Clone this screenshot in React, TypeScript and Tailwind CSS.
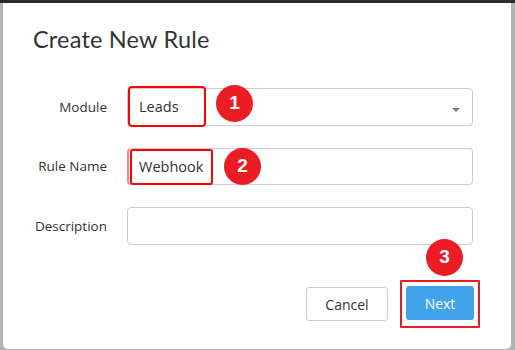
import React from "react";

function Badge({ n, className }: { n: string; className: string }) {
  return (
    <div
      className={
        "absolute flex h-[37px] w-[37px] items-center justify-center rounded-full bg-[#ec1c24] text-[19px] font-bold text-white " +
        className
      }
      style={{ fontFamily: "Arial, 'Liberation Sans', sans-serif" }}
    >
      {n}
    </div>
  );
}

export default function App() {
  return (
    <div
      className="relative h-[350px] w-[515px] overflow-hidden border-t-[3px] border-[#2b2b2b] bg-[#b3b3b3]"
      style={{ fontFamily: "'Open Sans', sans-serif" }}
    >
      <div className="ml-[3px] h-[346px] w-[508px] rounded-b-[5px] bg-white pl-[30px] pt-[22px]">
        <h1
          className="text-[23.5px] leading-[28px] tracking-[0.2px] text-[#333]"
          style={{ fontFamily: "Lato, sans-serif" }}
        >
          Create New Rule
        </h1>

        <div className="mt-[35px] flex flex-col gap-[22px]">
          {/* Module */}
          <div className="flex items-center gap-[20px]">
            <label className="w-[74px] whitespace-nowrap text-right text-[13.5px] text-[#333]">Module</label>
            <div className="relative flex h-[38px] w-[346px] items-center rounded-[4px] border border-[#ccc] pl-[11px] text-[14.5px] text-[#333]">
              Leads
              <span className="absolute right-[12px] top-[19px] h-0 w-0 border-x-[4px] border-t-[4px] border-x-transparent border-t-[#777]" />
              <div className="absolute left-[0px] top-[-3px] h-[41px] w-[78px] rounded-[4px] border-2 border-[#f00]" />
            </div>
          </div>

          {/* Rule Name */}
          <div className="flex items-center gap-[20px]">
            <label className="w-[74px] whitespace-nowrap text-right text-[13.5px] text-[#333]">Rule Name</label>
            <div className="relative flex h-[37px] w-[346px] items-center rounded-[4px] border border-[#ccc] border-l-[#f08a8a] border-l-2 pl-[10px] text-[14.5px] text-[#333]">
              Webhook
              <div className="absolute left-[1px] top-[0px] h-[36px] w-[83px] rounded-[3px] border-2 border-[#f00]" />
            </div>
          </div>

          {/* Description */}
          <div className="flex items-center gap-[20px]">
            <label className="w-[74px] whitespace-nowrap text-right text-[13.5px] text-[#333]">Description</label>
            <div className="h-[38px] w-[346px] rounded-[4px] border border-[#ccc]" />
          </div>
        </div>

        <div className="mt-[42px] flex w-[440px] justify-end gap-[12px]">
          <button className="h-[34px] w-[82px] rounded-[3px] border border-[#ccc] bg-white text-[14px] text-[#333]">
            Cancel
          </button>
          <div className="-my-[7px] -mr-[7px] rounded-[1px] border-2 border-[#e31e24] p-[4px]">
            <button className="h-[34px] w-[68px] rounded-[3px] bg-[#42a3ea] text-[14px] text-white">
              Next
            </button>
          </div>
        </div>
      </div>

      <Badge n="1" className="left-[216px] top-[82px]" />
      <Badge n="2" className="left-[224px] top-[145px]" />
      <Badge n="3" className="left-[426px] top-[236px]" />
    </div>
  );
}
